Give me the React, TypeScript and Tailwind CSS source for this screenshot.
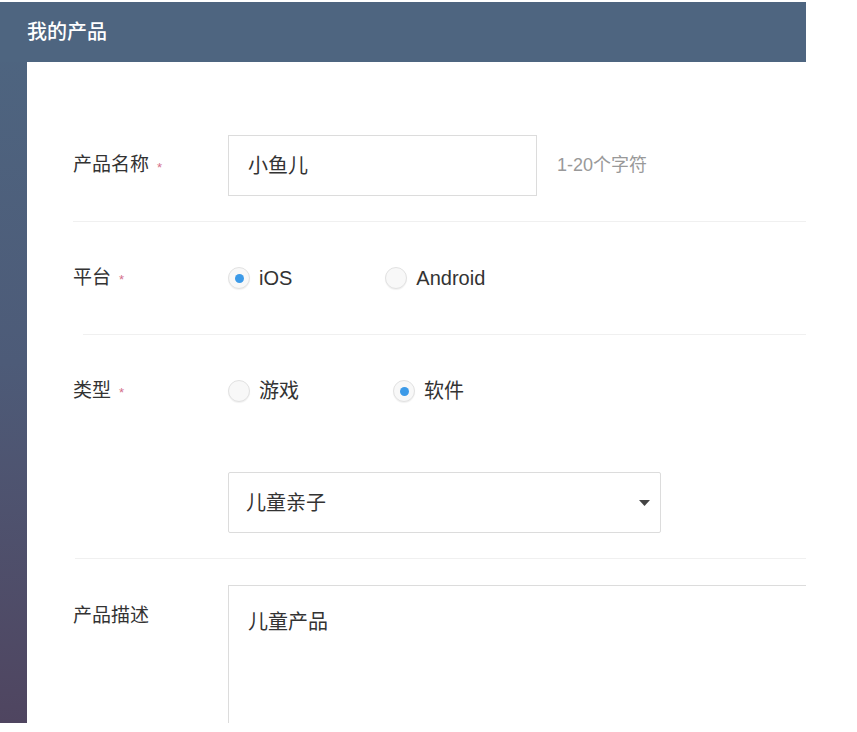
import React from "react";

const font = { fontFamily: '"Liberation Sans", "Noto Sans CJK SC", sans-serif' };

const Star = () => <span className="ml-[8px] text-[13px] text-[#d4718b] relative top-[2px]">*</span>;

const Radio: React.FC<{ label: string; checked?: boolean }> = ({ label, checked }) => (
    <div className="flex items-center gap-[9px] h-[22px]">
        <div className="w-[22px] h-[22px] rounded-full border border-[#e2e2e2] bg-[#f8f8f8] shadow-[0_1px_1px_rgba(0,0,0,0.06)] flex items-center justify-center">
            {checked && <div className="w-[9px] h-[9px] rounded-full bg-[#3c9ae8]"/>}
        </div>
        <span className="text-[20px] leading-[22px] text-[#333]">{label}</span>
    </div>
);

export default function App() {
    return (
        <div className="w-[857px] h-[732px] bg-white pt-[2px]" style={font}>
            <div className="w-[806px] h-[721px] flex flex-col overflow-hidden bg-gradient-to-b from-[#4e6681] via-[#4d5b78] to-[#4f4560]">
                <div className="h-[60px] shrink-0 flex items-center pl-[27px] bg-[#4e6580]">
                    <h1 className="text-[20px] text-white font-medium">我的产品</h1>
                </div>
                <div className="flex-1 ml-[27px] bg-white overflow-hidden">
                    {/* 产品名称 */}
                    <div className="flex items-center pl-[46px] pt-[73px] pb-[25px]">
                        <div className="w-[155px] shrink-0 flex items-center text-[19px] text-[#333]">产品名称<Star/></div>
                        <div className="w-[309px] h-[61px] shrink-0 border border-[#dcdcdc] flex items-center pl-[19px] text-[20px] text-[#333]">小鱼儿</div>
                        <span className="ml-[20px] text-[18px] text-[#999]">1-20个字符</span>
                    </div>
                    <div className="ml-[46px] h-px bg-[#f0f0f0]"/>

                    {/* 平台 */}
                    <div className="flex items-center pl-[46px] h-[112px]">
                        <div className="w-[155px] shrink-0 flex items-center text-[19px] text-[#333]">平台<Star/></div>
                        <div className="flex items-center gap-[93px]">
                            <Radio label="iOS" checked/>
                            <Radio label="Android"/>
                        </div>
                    </div>
                    <div className="ml-[56px] h-px bg-[#f0f0f0]"/>

                    {/* 类型 */}
                    <div className="pl-[46px] pt-[45px] pb-[25px]">
                        <div className="flex items-center h-[22px]">
                            <div className="w-[155px] shrink-0 flex items-center text-[19px] text-[#333]">类型<Star/></div>
                            <div className="flex items-center gap-[94px]">
                                <Radio label="游戏"/>
                                <Radio label="软件" checked/>
                            </div>
                        </div>
                        <div className="ml-[155px] mt-[70px] w-[433px] h-[61px] border border-[#dcdcdc] rounded-[2px] flex items-center justify-between pl-[17px] pr-[10px]">
                            <span className="text-[20px] text-[#333]">儿童亲子</span>
                            <svg width="11" height="6" viewBox="0 0 11 6"><path d="M0 0h11L5.5 6z" fill="#444"/></svg>
                        </div>
                    </div>
                    <div className="ml-[48px] h-px bg-[#f0f0f0]"/>

                    {/* 产品描述 */}
                    <div className="flex items-start pl-[46px] pt-[26px]">
                        <div className="w-[155px] shrink-0 pt-[17px] text-[19px] text-[#333]">产品描述</div>
                        <div className="w-[640px] h-[200px] shrink-0 border border-[#dcdcdc] pl-[19px] pt-[24px]">
                            <span className="text-[20px] leading-[24px] text-[#333]">儿童产品</span>
                        </div>
                    </div>
                </div>
            </div>
        </div>
    );
}
